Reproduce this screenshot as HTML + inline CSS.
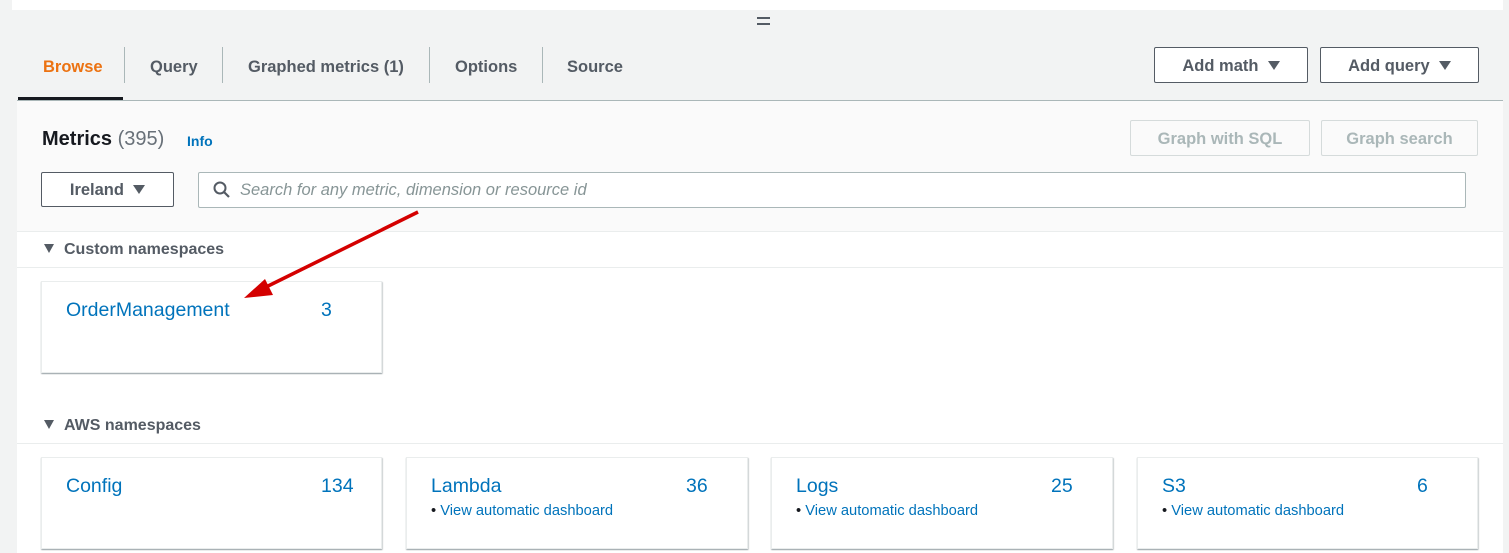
<!DOCTYPE html>
<html><head><style>
*{margin:0;padding:0;box-sizing:border-box}
body{width:1509px;height:553px;overflow:hidden;background:#f2f3f3;font-family:"Liberation Sans",sans-serif;position:relative;color:#16191f}
.a{position:absolute}
.tab{position:absolute;top:58px;font-size:16.5px;font-weight:bold;color:#545b64}
.sep{position:absolute;top:47px;width:1px;height:36px;background:#aab7b8}
.btn{position:absolute;border:1px solid #545b64;border-radius:2px;background:#fff;font-weight:bold;font-size:16.5px;color:#545b64;text-align:center}
.dis{position:absolute;border:1px solid #d5dbdb;border-radius:2px;font-weight:bold;font-size:16.5px;color:#aab7b8;text-align:center;line-height:36px}
.card{position:absolute;background:#fff;border:1px solid #eaeded;box-shadow:0 1px 1px rgba(0,28,36,.3),1px 1px 1px rgba(0,28,36,.15);height:92px}
.card .n{position:absolute;left:24px;top:17px;font-size:19.5px;color:#0073bb}
.card .c{position:absolute;top:17px;font-size:19.5px;color:#0073bb}
.card .v{position:absolute;left:24px;top:45px;font-size:14.7px;color:#0073bb}
.tri{display:inline-block;width:0;height:0;border-left:6px solid transparent;border-right:6px solid transparent;border-top:9px solid #545b64;vertical-align:middle}
.sec{position:absolute;left:44px;font-size:16px;font-weight:bold;color:#545b64}
</style></head><body>
<div class="a" style="left:12px;top:0;width:1491px;height:10px;background:#fff"></div>
<div class="a" style="left:757px;top:17px;width:13px;height:2px;background:#545b64"></div>
<div class="a" style="left:757px;top:23px;width:13px;height:2px;background:#545b64"></div>
<div class="tab" style="left:43px;color:#ec7211">Browse</div>
<div class="sep" style="left:124px"></div>
<div class="tab" style="left:150px">Query</div>
<div class="sep" style="left:222px"></div>
<div class="tab" style="left:248px">Graphed metrics (1)</div>
<div class="sep" style="left:429px"></div>
<div class="tab" style="left:455px">Options</div>
<div class="sep" style="left:542px"></div>
<div class="tab" style="left:567px">Source</div>
<div class="btn" style="left:1154px;top:47px;width:154px;height:36px;line-height:37px">Add math &nbsp;<span class="tri" style="margin-top:-3px"></span></div>
<div class="btn" style="left:1320px;top:47px;width:159px;height:36px;line-height:37px">Add query &nbsp;<span class="tri" style="margin-top:-3px"></span></div>
<div class="a" style="left:17px;top:100px;width:1486px;height:453px;background:#fafafa;border-top:1px solid #aab7b8"></div>
<div class="a" style="left:18px;top:97px;width:105px;height:3px;background:#16191f"></div>
<div class="a" style="left:42px;top:128px;font-size:20px;font-weight:bold">Metrics <span style="font-weight:normal;color:#687078">(395)</span></div>
<div class="a" style="left:187px;top:133px;font-size:14px;font-weight:bold;color:#0073bb">Info</div>
<div class="dis" style="left:1130px;top:120px;width:180px;height:36px">Graph with SQL</div>
<div class="dis" style="left:1321px;top:120px;width:157px;height:36px">Graph search</div>
<div class="btn" style="left:41px;top:172px;width:133px;height:35px;line-height:35px">Ireland &nbsp;<span class="tri" style="margin-top:-3px"></span></div>
<div class="a" style="left:198px;top:172px;width:1268px;height:36px;background:#fff;border:1px solid #aab7b8;border-radius:2px"></div>
<svg class="a" style="left:213px;top:181px" width="18" height="18" viewBox="0 0 18 18"><circle cx="7" cy="7" r="5.5" fill="none" stroke="#545b64" stroke-width="2"/><line x1="11" y1="11" x2="16" y2="16" stroke="#545b64" stroke-width="2.2"/></svg>
<div class="a" style="left:240px;top:181px;font-size:16.5px;font-style:italic;color:#879596">Search for any metric, dimension or resource id</div>
<div class="a" style="left:17px;top:231px;width:1486px;height:322px;background:#fff;border-top:1px solid #eaeded"></div>
<div class="a" style="left:17px;top:267px;width:1486px;height:1px;background:#eaeded"></div>
<div class="sec" style="top:241px"><span class="tri" style="border-width:9px 5px 0 5px;margin-right:10px;margin-top:-3px"></span>Custom namespaces</div>
<div class="card" style="left:41px;top:281px;width:341px"><div class="n">OrderManagement</div><div class="c" style="left:279px">3</div></div>
<div class="a" style="left:17px;top:443px;width:1486px;height:1px;background:#eaeded"></div>
<div class="sec" style="top:417px"><span class="tri" style="border-width:9px 5px 0 5px;margin-right:10px;margin-top:-3px"></span>AWS namespaces</div>
<div class="card" style="left:41px;top:457px;width:341px"><div class="n">Config</div><div class="c" style="left:279px">134</div></div>
<div class="card" style="left:406px;top:457px;width:342px"><div class="n">Lambda</div><div class="c" style="left:279px">36</div><div class="v"><span style="color:#16191f">•</span> View automatic dashboard</div></div>
<div class="card" style="left:771px;top:457px;width:342px"><div class="n">Logs</div><div class="c" style="left:279px">25</div><div class="v"><span style="color:#16191f">•</span> View automatic dashboard</div></div>
<div class="card" style="left:1137px;top:457px;width:341px"><div class="n">S3</div><div class="c" style="left:279px">6</div><div class="v"><span style="color:#16191f">•</span> View automatic dashboard</div></div>
<svg class="a" style="left:0;top:0" width="1509" height="553"><line x1="418" y1="212" x2="262" y2="289" stroke="#d40000" stroke-width="3.5"/><polygon points="244,298 265,279 273,295" fill="#d40000"/></svg>
</body></html>
